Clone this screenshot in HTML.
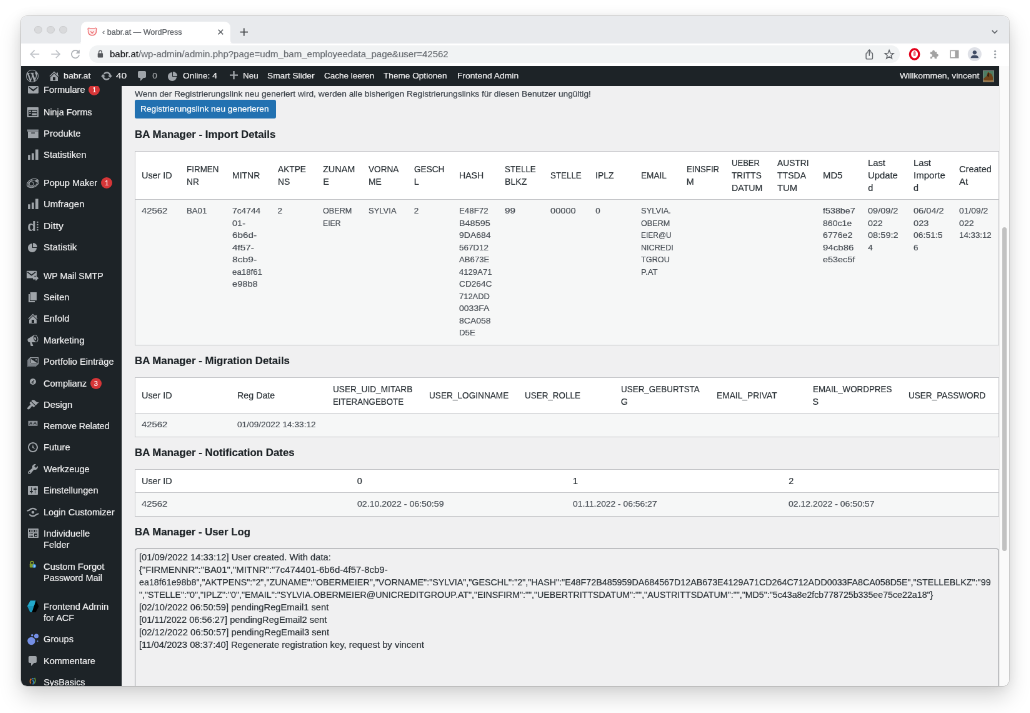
<!DOCTYPE html>
<html lang="de">
<head>
<meta charset="utf-8">
<title>‹ babr.at — WordPress</title>
<style>
*{box-sizing:border-box}
html,body{margin:0;padding:0}
body{width:1030px;height:713px;overflow:hidden;background:#fff;position:relative;font-family:"Liberation Sans",sans-serif}
#shadow{position:absolute;left:21.2px;top:15.8px;width:987.4px;height:670.3px;border-radius:6px;box-shadow:0 11px 22px rgba(0,0,0,.17),0 0 0 .5px rgba(0,0,0,.2),0 0 12px rgba(0,0,0,.07)}
#win{position:absolute;left:21px;top:16px;width:1580.2px;height:1072.2px;transform:scale(.625);transform-origin:0 0;will-change:transform;-webkit-text-stroke:.22px;border-radius:9.5px;overflow:hidden;background:#f0f0f1;color:#3c434a;font-size:13px}
#win div,#win span,#win svg,#win h2,#win table{position:absolute}
#win span{white-space:nowrap;transform-origin:0 50%}
/* chrome */
#tabstrip{left:0;top:0;width:1582px;height:43.52px;background:#e8eaed}
.tl{width:12.4px;height:12.4px;border-radius:50%;background:#d9dadc;border:1px solid #cbccce;top:16px}
#tab{left:96.32px;top:8.64px;width:238.72px;height:40px;background:#fff;border-radius:9px 9px 0 0}
#toolbar{left:0;top:43.52px;width:1582px;height:40px;background:#fff}
#pill{left:108.96px;top:3.68px;width:1297.44px;height:27.36px;border-radius:14px;background:#f1f3f4}
/* wp admin bar */
#adminbar{z-index:3;left:0;top:79.84px;width:1564.8px;height:31.92px;background:#1d2327;color:#f0f0f1}
#adminbar span{top:0;line-height:31.92px;font-size:13.6px}
/* sidebar */
#menu{z-index:2;left:0;top:100px;width:161.3px;height:980px;background:#1d2327;overflow:hidden}
.mi{left:36.2px;font-size:14.4px;line-height:18px;color:#f0f0f1}
.badge{width:18px;height:18px;border-radius:9px;background:#d63638;color:#fff;font-size:11px;line-height:18px;text-align:center}
/* content */
#content{left:160px;top:113px;width:1404.8px;height:961px;background:#f0f0f1;overflow:hidden}
#win h2{transform-origin:0 50%;margin:0;font-size:17px;line-height:22px;font-weight:bold;color:#1d2327;left:21.8px;white-space:nowrap}
#win table{border-collapse:separate;border-spacing:0;table-layout:fixed;left:21.8px;width:1382.8px;background:#fff;border:1px solid #c3c4c7}
th{font-weight:normal;text-align:left;font-size:14.4px;line-height:20px;padding:8px 10px 8px 9.8px;color:#2c3338;border-bottom:1px solid #c3c4c7;vertical-align:middle;white-space:nowrap;overflow:hidden}
td{font-size:13.4px;line-height:19.5px;padding:8px 10px 8px 9.8px;color:#4a5057;background:#f6f7f7;vertical-align:top;white-space:nowrap;overflow:hidden}
#log{left:21.8px;top:739.5px;width:1382.8px;height:240px;border:1px solid #8c8f94;border-radius:4px;background:#f0f0f1}
#log span{left:6.2px;font-size:14.3px;line-height:20px;color:#2c3338}
#win table span{position:static;display:inline-block}
#scroll{left:1564.8px;top:79.84px;width:17px;height:994px;background:#fafafa;border-left:1px solid #ececec}
#thumb{left:4.16px;top:257.76px;width:7.36px;height:518.88px;border-radius:4px;background:#c1c1c1}
</style>
</head>
<body>
<div id="shadow"></div>
<div id="win">
<div id="tabstrip">
<div class="tl" style="left:21.3px;top:15.7px"></div><div class="tl" style="left:41.4px;top:15.7px"></div><div class="tl" style="left:61.3px;top:15.7px"></div>
<div id="tab"><span style="left:33.8px;top:9.3px;font-size:12.6px;line-height:16px;color:#5f6368;transform:scaleX(0.9983)">‹ babr.at — WordPress</span></div>
</div>
<div id="toolbar">
<div id="pill"><span style="left:33.1px;top:4.5px;font-size:14.4px;line-height:18px;color:#6b6f74;transform:scaleX(1.0449)"><b style="font-weight:normal;color:#202124">babr.at</b>/wp-admin/admin.php?page=udm_bam_employeedata_page&amp;user=42562</span></div>
</div>
<svg style="left:0;top:0;z-index:5" width="1580" height="81" viewBox="0 0 1580 81"><path d="M29.2 61.0H17.0M21.6 54.9l-6.1 6.1l6.1 6.1" fill="none" stroke="#bdc1c6" stroke-width="1.700" stroke-linejoin="miter"/><path d="M48.3 61.0H60.5M55.9 54.9l6.1 6.1l-6.1 6.1" fill="none" stroke="#bdc1c6" stroke-width="1.700" stroke-linejoin="miter"/><path d="M91.6 56.9A6.200 6.200 0 1 0 93.1 62.3" fill="none" stroke="#aeb2b7" stroke-width="1.700"/><path d="M93.8 53.7v6.400h-6.400z" fill="#aeb2b7"/><rect x="122.7" y="59.5" width="8.400" height="7" rx="1" fill="#55585c"/><path d="M124.6 59.9v-2.200a2.300 2.300 0 0 1 4.600 0v2.200" fill="none" stroke="#55585c" stroke-width="1.400"/><path d="M1355.4 58.9h-1.800a1.500 1.500 0 0 0 -1.500 1.500v7a1.500 1.500 0 0 0 1.500 1.500h7.400a1.500 1.500 0 0 0 1.500 -1.500v-7a1.500 1.500 0 0 0 -1.500 -1.500h-1.800" fill="none" stroke="#5f6368" stroke-width="1.400"/><path d="M1357.3 63.8v-9.500m-2.800 2.600l2.800 -2.800l2.800 2.800" fill="none" stroke="#5f6368" stroke-width="1.400"/><polygon points="1389.1,54.7 1391.0,59.5 1396.1,59.8 1392.2,63.0 1393.4,67.9 1389.1,65.2 1384.8,67.9 1386.1,63.0 1382.2,59.8 1387.2,59.5" fill="none" stroke="#5f6368" stroke-width="1.500" stroke-linejoin="miter"/><ellipse cx="1429.6" cy="61.1" rx="7.200" ry="8.100" fill="none" stroke="#e3001b" stroke-width="3.400"/><path d="M1427.7 62.6v-5.500h1.300v-1h1.300v1h1.300v5.500c0 2-3.900 2-3.900 0z" fill="#e3001b" opacity=".55"/><path d="M1455.0 57.6h3.200a2 2 0 1 1 3.600 0h3.200v3.400a2 2 0 1 1 0 3.600v3.600h-3.400a2 2 0 1 0 -3.600 0h-3v-3.300a2.100 2.100 0 1 0 0 -3.800z" fill="#a3a3a3"/><rect x="1487.1" y="55.4" width="12.600" height="11.400" fill="none" stroke="#a3a3a3" stroke-width="1.600"/><rect x="1494.3" y="55.4" width="5.400" height="11.400" fill="#a3a3a3"/><circle cx="1525.8" cy="61.1" r="11" fill="#dfe1e7"/><circle cx="1525.8" cy="58.3" r="3.100" fill="#3f4a63"/><path d="M1519.6 67.3c0 -3.400 2.600 -4.600 6.200 -4.600s6.200 1.200 6.200 4.600z" fill="#3f4a63"/><circle cx="1558.6" cy="56.3" r="1.500" fill="#9aa0a6"/><circle cx="1558.6" cy="61.3" r="1.500" fill="#9aa0a6"/><circle cx="1558.6" cy="66.2" r="1.500" fill="#9aa0a6"/><path d="M1553.7 23.2l4.200 4.200l4.200 -4.200" fill="none" stroke="#5f6368" stroke-width="1.700"/><path d="M315.6 21.8l7.600 7.600m0 -7.600l-7.600 7.600" fill="none" stroke="#5f6368" stroke-width="1.500"/><path d="M350.6 25.6h12.400m-6.200 -6.200v12.400" fill="none" stroke="#44474a" stroke-width="1.700"/><path d="M107.5 22.3c-1.500 -2 .5 -4 2.600 -2.600h7.600c2.100 -1.400 4.100 .6 2.600 2.600c.6 4 -.6 8.600 -6.400 8.600s-7 -4.600 -6.400 -8.600z" fill="#fdecec" stroke="#ee6b6e" stroke-width="1.300"/><path d="M111.3 24.3l2.600 3.400l2.600 -3.400" fill="none" stroke="#ee6b6e" stroke-width="1.300"/><path d="M96.3 43.5h-4.500q4.500 0 4.500 -4.500zM335.0 43.5h4.500q-4.500 0 -4.500 -4.500z" fill="#fff"/></svg>
<div id="adminbar">
<span style="left:68.3px;transform:scaleX(1.0450)">babr.at</span><span style="left:152.1px;transform:scaleX(1.1386)">40</span><span style="left:210.2px;transform:scaleX(1.0000);color:#a7aaad">0</span><span style="left:259.2px;transform:scaleX(1.0072)">Online: 4</span><span style="left:355.0px;transform:scaleX(0.9982)">Neu</span><span style="left:394.2px;transform:scaleX(1.0107)">Smart Slider</span><span style="left:484.6px;transform:scaleX(0.9942)">Cache leeren</span><span style="left:580.0px;transform:scaleX(1.0024)">Theme Optionen</span><span style="left:698.4px;transform:scaleX(1.0226)">Frontend Admin</span><span style="left:1405.9px;transform:scaleX(1.0209)">Willkommen, vincent</span><svg style="left:7.6px;top:6.5px" width="20" height="20" viewBox="0 0 20 20"><path fill="#9fa4a9" d="M20 10c0-5.510-4.490-10-10-10C4.480 0 0 4.490 0 10c0 5.520 4.480 10 10 10 5.510 0 10-4.480 10-10zM7.780 15.370L4.370 6.220c.55-.02 1.170-.08 1.170-.08.5-.06.440-1.130-.06-1.110 0 0-1.450.110-2.370.110-.18 0-.37 0-.58-.01C4.120 2.690 6.870 1.110 10 1.110c2.330 0 4.450.87 6.050 2.340-.68-.11-1.650.39-1.650 1.580 0 .74.450 1.360.9 2.100.35.610.55 1.360.55 2.460 0 1.490-1.400 5-1.400 5l-3.030-8.370c.54-.02.820-.17.820-.17.5-.05.440-1.250-.06-1.220 0 0-1.440.120-2.380.120-.87 0-2.330-.12-2.330-.12-.5-.03-.56 1.200-.06 1.220l.92.080 1.260 3.410zM17.410 10c.24-.64.740-1.870.43-4.250.7 1.290 1.050 2.710 1.050 4.250 0 3.290-1.730 6.240-4.400 7.780.97-2.590 1.940-5.200 2.920-7.780zM6.100 18.090C3.120 16.650 1.110 13.530 1.110 10c0-1.300.23-2.480.72-3.590C3.250 10.300 4.670 14.200 6.100 18.090zm4.030-6.630l2.580 6.980c-.86.290-1.760.45-2.710.45-.79 0-1.570-.11-2.290-.33.810-2.380 1.620-4.740 2.420-7.100z"/></svg><svg style="left:42.8px;top:6.5px" width="20" height="20" viewBox="0 0 20 20"><path fill="#9fa4a9" d="M16 8.500l1.530 1.530-1.060 1.060L10 4.620l-6.470 6.470-1.060-1.060L10 2.500l4 4v-2h2v4zm-6-2.460l6 5.990V18H4v-5.970zM12 17v-5H8v5h4z"/></svg><svg style="left:126.6px;top:6.5px" width="20" height="20" viewBox="0 0 20 20"><path fill="#9fa4a9" d="M10.200 3.280c3.530 0 6.430 2.610 6.920 6h2.080l-3.500 4-3.500-4h2.320c-.45-1.970-2.210-3.450-4.320-3.450-1.450 0-2.730.71-3.540 1.780L4.950 5.660C6.230 4.200 8.110 3.280 10.200 3.280zm-.4 13.440c-3.520 0-6.430-2.610-6.920-6H.8l3.500-4c1.170 1.330 2.330 2.670 3.500 4H5.480c.45 1.970 2.210 3.450 4.320 3.450 1.450 0 2.730-.71 3.540-1.780l1.710 1.950c-1.280 1.460-3.150 2.380-5.250 2.380z"/></svg><svg style="left:184.2px;top:6.5px" width="20" height="20" viewBox="0 0 20 20"><path fill="#9fa4a9" d="M5 2h9c1.100 0 2 .9 2 2v7c0 1.100-.9 2-2 2h-2l-5 5v-5H5c-1.100 0-2-.9-2-2V4c0-1.100.9-2 2-2z"/></svg><svg style="left:233.2px;top:6.5px" width="20" height="20" viewBox="0 0 20 20"><path fill="#9fa4a9" d="M10 10V3c3.870 0 7 3.130 7 7h-7zM9 4v7h7c0 3.870-3.130 7-7 7s-7-3.130-7-7 3.130-7 7-7z"/></svg><svg style="left:329.7px;top:6.5px" width="20" height="20" viewBox="0 0 20 20"><path fill="#9fa4a9" d="M17 7.400v2.400h-5.300v5.400H9.300V9.800H4V7.400h5.300V2h2.400v5.400z"/></svg>
<svg style="left:1539.0px;top:6.7px" width="18" height="19" viewBox="0 0 18 19"><rect width="18" height="19" fill="#80857f"/><rect x="1" y="1" width="16" height="17" fill="#4d7c63"/><path d="M1 18V13c2-1 3-3 5-4c.5-3 1.500-6 3-6.500c1 1 1.500 2 2.500 2c2.500 1 4 4 4.500 7v6.500z" fill="#6e4218"/><path d="M7 9c.5-2.500 1-4.500 2-5.500c.8 1.500 .8 4 .3 7z" fill="#2b1a0c"/><path d="M1 15c4 1 10 1.500 16 0v3H1z" fill="#9a7444"/></svg>
</div>
<div id="menu">
<span class="mi" style="top:8.9px;transform:scaleX(1.0146)">Formulare</span><span class="badge" style="left:108.3px;top:8.9px">1</span><svg style="left:8.6px;top:7.9px" width="20" height="20" viewBox="0 0 20 20"><path fill="#9fa4a9" d="M3.87 4h13.25C18.37 4 19 4.59 19 5.79v8.42c0 1.19-.63 1.79-1.88 1.79H3.87c-1.25 0-1.88-.6-1.88-1.79V5.79c0-1.2.63-1.79 1.88-1.79zm6.62 8.6l6.74-5.53c.24-.2.43-.66.13-1.07-.29-.41-.82-.42-1.17-.17l-5.7 3.86L4.8 5.83c-.35-.25-.88-.24-1.17.17-.3.41-.11.87.13 1.07z"/></svg>
<span class="mi" style="top:44.6px;transform:scaleX(1.0001)">Ninja Forms</span><svg style="left:8.6px;top:43.6px" width="20" height="20" viewBox="0 0 20 20"><path fill="#9fa4a9" d="M2 2h16c.55 0 1 .45 1 1v14c0 .55-.45 1-1 1H2c-.55 0-1-.45-1-1V3c0-.55.45-1 1-1zm15 14V6H3v10h14zM4 7.5h3v2H4zm4.5 0H16v2.5H8.500zm0 4H16V15H8.500zM4 11.500h3v1.200H4z"/></svg>
<span class="mi" style="top:78.5px;transform:scaleX(1.0357)">Produkte</span><svg style="left:8.6px;top:77.5px" width="20" height="20" viewBox="0 0 20 20"><path fill="#858b91" d="M19 3.500v3.200H1V3.500z"/><path fill="#9fa4a9" d="M2 6.700h16.800V17.300H2zm11 3.100V8.500H7.200v1.300z"/></svg>
<span class="mi" style="top:112.9px;transform:scaleX(1.0335)">Statistiken</span><svg style="left:8.6px;top:111.9px" width="20" height="20" viewBox="0 0 20 20"><path fill="#9fa4a9" d="M18.600 18V1.500h-4.500V18zm-6.900 0V7.600H8V18zm-5.900 0v-7.700H2.100V18z"/></svg>
<span class="mi" style="top:158.4px;transform:scaleX(1.0071)">Popup Maker</span><span class="badge" style="left:128.2px;top:158.4px">1</span><svg style="left:8.6px;top:157.4px" width="20" height="20" viewBox="0 0 20 20"><g fill="none" stroke="#9fa4a9" stroke-width="1.100"><ellipse cx="10" cy="10.500" rx="10" ry="6.500" transform="rotate(-24 10 10.500)"/><ellipse cx="9.500" cy="10.800" rx="8" ry="4.800" transform="rotate(-24 10 10.500)"/><circle cx="7.500" cy="11.500" r="3.400"/></g><circle cx="16" cy="7" r="2.100" fill="#9fa4a9"/></svg>
<span class="mi" style="top:192.4px;transform:scaleX(1.0353)">Umfragen</span><svg style="left:8.6px;top:191.4px" width="20" height="20" viewBox="0 0 20 20"><path fill="#9fa4a9" d="M18.600 18V1.500h-4.500V18zm-6.900 0V7.600H8V18zm-5.900 0v-7.700H2.100V18z"/></svg>
<span class="mi" style="top:226.8px;transform:scaleX(1.1061)">Ditty</span><svg style="left:8.6px;top:225.8px" width="20" height="20" viewBox="0 0 20 20"><text x="1.200" y="17.600" font-family="Liberation Sans,sans-serif" font-weight="bold" font-size="22.500" fill="#9fa4a9">d</text><g fill="#9fa4a9"><rect x="16.400" y="2.800" width="2.100" height="2.100"/><rect x="16.400" y="6.900" width="2.100" height="2.100"/><rect x="16.400" y="11" width="2.100" height="2.100"/><rect x="16.400" y="15.100" width="2.100" height="2.100"/></g></svg>
<span class="mi" style="top:261.4px;transform:scaleX(1.0603)">Statistik</span><svg style="left:8.6px;top:260.4px" width="20" height="20" viewBox="0 0 20 20"><path fill="#9fa4a9" d="M10 10V3c3.870 0 7 3.130 7 7h-7zM9 4v7h7c0 3.870-3.130 7-7 7s-7-3.130-7-7 3.130-7 7-7z"/></svg>
<span class="mi" style="top:306.7px;transform:scaleX(0.9831)">WP Mail SMTP</span><svg style="left:8.6px;top:305.7px" width="20" height="20" viewBox="0 0 20 20"><g transform="translate(-1 .3)"><path fill="#9fa4a9" d="M1.800 1.500h14c1 0 1.500.5 1.500 1.500v6.500h-3.800v3.800H1.800c-1 0-1.500-.5-1.500-1.500V3c0-1 .5-1.500 1.500-1.500z"/><path fill="none" stroke="#1d2327" stroke-width="1.700" d="M2.300 3.300l6.500 5 6.500-5"/><path fill="#9fa4a9" d="M11 11.200h4.500V8.600l4.700 4.600-4.700 4.600v-2.600H11z"/></g></svg>
<span class="mi" style="top:340.9px;transform:scaleX(1.0153)">Seiten</span><svg style="left:8.6px;top:339.9px" width="20" height="20" viewBox="0 0 20 20"><path fill="#9fa4a9" d="M6 15V2h10v13H6zm-1 1h8v2H3V5h2v11z"/></svg>
<span class="mi" style="top:375.3px;transform:scaleX(1.0153)">Enfold</span><svg style="left:8.6px;top:374.3px" width="20" height="20" viewBox="0 0 20 20"><path fill="#9fa4a9" d="M16 8.500l1.530 1.530-1.060 1.060L10 4.620l-6.470 6.470-1.060-1.060L10 2.500l4 4v-2h2v4zm-6-2.460l6 5.990V18H4v-5.970zM12 17v-5H8v5h4z"/></svg>
<span class="mi" style="top:409.7px;transform:scaleX(1.0353)">Marketing</span><svg style="left:8.6px;top:408.7px" width="20" height="20" viewBox="0 0 20 20"><path fill="#9fa4a9" d="M18.150 5.940c.46 1.620.38 3.220-.02 4.480-.42 1.280-1.260 2.180-2.300 2.480-.16.060-.26.060-.4.060-.06.020-.12.020-.18.020-.06.020-.14.020-.22.020h-6.800l2.220 5.500c.02.140-.06.260-.14.340-.08.100-.24.160-.34.160H6.950c-.1 0-.26-.06-.34-.16-.08-.08-.16-.2-.14-.34l-1-5.500H4.250l-.02-.02c-.5.060-1.080-.18-1.540-.62s-.88-1.080-1.060-1.880c-.24-.8-.2-1.560-.02-2.200.18-.62.580-1.080 1.060-1.300l.02-.02 9-5.400c.1-.06.180-.1.240-.16.060-.04.140-.08.240-.12.160-.1.300-.12.460-.18 1.040-.3 2.240.1 3.220.98 1.020.9 1.840 2.260 2.300 3.860zm-2.580 5.980h-.02c.4-.1.740-.34 1.040-.7.580-.7.860-1.760.86-3.040 0-.64-.1-1.300-.28-1.980-.34-1.360-1.020-2.500-1.780-3.240s-1.680-1.100-2.460-.88c-.82.220-1.400.96-1.700 2-.32 1.040-.28 2.360.06 3.720.38 1.360 1 2.500 1.800 3.240.78.740 1.620 1.100 2.480.88zm-2.540-7.080c.22-.04.420-.02.620.04.380.16.760.48 1.020 1s.42 1.200.42 1.780c0 .3-.04.560-.12.800-.18.480-.44.840-.86.940-.34.100-.8-.06-1.140-.4s-.64-.86-.78-1.500c-.18-.62-.12-1.240.02-1.720s.48-.84.820-.94z"/></svg>
<span class="mi" style="top:444.1px;transform:scaleX(1.0199)">Portfolio Einträge</span><svg style="left:8.6px;top:443.1px" width="20" height="20" viewBox="0 0 20 20"><path d="M1 7.500L5.500 3H19v11l-4.500 4H1z" fill="#7b8187"/><path d="M5 3h14v11H5z" fill="#9fa4a9"/><path d="M6.300 4.300h11.400v8.400H6.300z" fill="#1d2327"/><path d="M7 5.800l9.500 6.200H7z" fill="#9fa4a9"/><circle cx="15.200" cy="7.200" r="1.100" fill="#9fa4a9"/><path d="M1.600 8v9.400H14" fill="none" stroke="#5d6369" stroke-width=".9"/></svg>
<span class="mi" style="top:478.5px;transform:scaleX(1.0163)">Complianz</span><span class="badge" style="left:110.9px;top:478.5px">3</span><svg style="left:8.6px;top:477.5px" width="20" height="20" viewBox="0 0 20 20"><circle cx="10" cy="7" r="5" fill="#9fa4a9"/><path d="M8 8.500l4-3.500M8.200 9.200h3.200" stroke="#1d2327" stroke-width="1.300" fill="none"/></svg>
<span class="mi" style="top:512.8px;transform:scaleX(1.0319)">Design</span><svg style="left:8.6px;top:511.8px" width="20" height="20" viewBox="0 0 20 20"><path fill="#9fa4a9" d="M14.480 11.060L7.410 3.990l1.500-1.500c.5-.56 2.300-.47 3.510.32 1.210.8 1.430 1.280 2.910 2.100 1.180.64 2.450 1.260 4.450.85zm-.71.710L6.700 4.700 4.930 6.470c-.39.390-.39 1.020 0 1.410l1.060 1.060c.39.390.39 1.030 0 1.420-.6.600-1.430 1.110-2.210 1.690-.35.260-.7.530-1.010.84C1.430 14.230.4 16.080 1.400 17.070c.99 1 2.840-.03 4.180-1.360.31-.31.580-.66.850-1.020.57-.78 1.080-1.610 1.690-2.210.39-.39 1.020-.39 1.410 0l1.060 1.060c.39.390 1.020.39 1.410 0z"/></svg>
<span class="mi" style="top:547.0px;transform:scaleX(0.9847)">Remove Related</span><svg style="left:8.6px;top:546.0px" width="20" height="20" viewBox="0 0 20 20"><rect x="2.500" y="1.800" width="15" height="8" fill="#8a8f95"/><path d="M4.500 7.500l2.500-3 1.500 3M11 7.500l2.500-3.200 2 3.200" stroke="#1d2327" stroke-width="1.200" fill="none"/></svg>
<span class="mi" style="top:581.2px;transform:scaleX(1.0269)">Future</span><svg style="left:8.6px;top:580.2px" width="20" height="20" viewBox="0 0 20 20"><path fill="#9fa4a9" d="M10 2c4.420 0 8 3.580 8 8s-3.580 8-8 8-8-3.580-8-8 3.580-8 8-8zm0 14c3.310 0 6-2.690 6-6s-2.690-6-6-6-6 2.690-6 6 2.690 6 6 6zm-.71-5.290c.07.050.14.100.23.150l-.02.020L14 13l-3.030-3.190L10 5l-.97 4.810h.01c0 .02-.01.050-.02.090S9 9.970 9 10c0 .28.100.52.290.71z"/></svg>
<span class="mi" style="top:615.8px;transform:scaleX(1.0166)">Werkzeuge</span><svg style="left:8.6px;top:614.8px" width="20" height="20" viewBox="0 0 20 20"><path fill="#9fa4a9" d="M16.680 9.770c-1.340 1.340-3.300 1.670-4.950.99l-5.410 6.520c-.99.990-2.590.990-3.580 0s-.99-2.590 0-3.570l6.520-5.420c-.68-1.650-.35-3.610.99-4.950 1.280-1.280 3.120-1.620 4.720-1.060l-2.890 2.890 2.820 2.820 2.860-2.870c.53 1.580.18 3.390-1.080 4.650zM3.810 16.210c.4.390 1.040.39 1.430 0 .4-.4.400-1.040 0-1.430-.39-.4-1.030-.4-1.430 0-.39.390-.39 1.030 0 1.430z"/></svg>
<span class="mi" style="top:650.4px;transform:scaleX(1.0124)">Einstellungen</span><svg style="left:8.6px;top:649.4px" width="20" height="20" viewBox="0 0 20 20"><path fill="#9fa4a9" d="M18 16V4c0-.55-.45-1-1-1H3c-.55 0-1 .45-1 1v12c0 .55.450 1 1 1h14c.55 0 1-.45 1-1zM8 11h1c.55 0 1 .45 1 1s-.45 1-1 1H8v1.500c0 .28-.22.500-.5.500s-.5-.22-.5-.5V13H6c-.55 0-1-.45-1-1s.45-1 1-1h1V5.500c0-.28.220-.5.500-.5s.5.220.5.500V11zm5-2h-1c-.55 0-1-.45-1-1s.45-1 1-1h1V5.500c0-.28.220-.5.500-.5s.5.220.5.500V7h1c.55 0 1 .45 1 1s-.45 1-1 1h-1v5.500c0 .28-.22.500-.5.500s-.5-.22-.5-.5V9z"/></svg>
<span class="mi" style="top:684.6px;transform:scaleX(1.0140)">Login Customizer</span><svg style="left:8.6px;top:683.6px" width="20" height="20" viewBox="0 0 20 20"><g fill="none" stroke="#9fa4a9" stroke-width="2.200" stroke-linecap="round"><path d="M1.500 7.500c1.500-.2 2.500-.6 3.600-1.600 2.800-2.600 7-2.600 9.800 0"/><path d="M18.500 12.500c-1.500.2-2.500.6-3.600 1.600-2.800 2.600-7 2.600-9.800 0"/></g><circle cx="10" cy="10" r="2.300" fill="#9fa4a9"/></svg>
<span class="mi" style="top:719.0px;transform:scaleX(1.0328)">Individuelle</span><span class="mi" style="top:737.0px;transform:scaleX(1.0157)">Felder</span><svg style="left:8.6px;top:718.0px" width="20" height="20" viewBox="0 0 20 20"><path fill="#9fa4a9" d="M19 16V3c0-.55-.45-1-1-1H3c-.55 0-1 .45-1 1v13c0 .55.450 1 1 1h15c.55 0 1-.45 1-1zM4 4h13v4H4V4zm1 1v2h3V5H5zm4 0v2h3V5H9zm4 0v2h3V5h-3zm-8.500 5c.28 0 .5.220.5.500s-.22.500-.5.500-.5-.22-.5-.5.220-.5.500-.5zM6 10h4v1H6v-1zm6 0h5v5h-5v-5zm-7.500 2c.28 0 .5.220.5.500s-.22.500-.5.500-.5-.22-.5-.5.220-.5.500-.5zM6 12h4v1H6v-1zm7 0v2h3v-2h-3zm-8.500 2c.28 0 .5.220.5.500s-.22.500-.5.500-.5-.22-.5-.5.220-.5.500-.5zM6 14h4v1H6v-1z"/></svg>
<span class="mi" style="top:772.3px;transform:scaleX(1.0234)">Custom Forgot</span><span class="mi" style="top:790.3px;transform:scaleX(1.0033)">Password Mail</span><svg style="left:8.6px;top:771.3px" width="20" height="20" viewBox="0 0 20 20"><path d="M6.300 5.500V3.800a2.300 2.300 0 0 1 4.600 0v1.700" fill="none" stroke="#8aa62f" stroke-width="1.500"/><rect x="4.800" y="5.200" width="7.600" height="6.300" rx="1" fill="#7f9c2c"/><circle cx="12.300" cy="9" r="2.900" fill="#3f92dd"/><circle cx="12.300" cy="9" r="1" fill="#bfe0ff"/></svg>
<span class="mi" style="top:835.5px;transform:scaleX(1.0248)">Frontend Admin</span><span class="mi" style="top:853.5px;transform:scaleX(1.0067)">for ACF</span><svg style="left:8.6px;top:834.5px" width="20" height="20" viewBox="0 0 20 20"><path d="M6 .5h9l4.500 9L14.500 19h-9L1 9.500z" fill="#000"/><path d="M6 .5h8.500L8.500 19h-3L1 9.500z" fill="#1b93b6"/><path d="M6 .5h8.500l-2.800 8.600H1.200z" fill="#23a9cb"/></svg>
<span class="mi" style="top:888.1px;transform:scaleX(1.0168)">Groups</span><svg style="left:8.6px;top:887.1px" width="20" height="20" viewBox="0 0 20 20"><g fill="#7590e6"><circle cx="7.500" cy="13" r="6.200"/><circle cx="15.500" cy="5" r="3.600"/><circle cx="8.800" cy="3.800" r="1.800"/><circle cx="17.500" cy="13.300" r="1"/></g></svg>
<span class="mi" style="top:923.0px;transform:scaleX(1.0056)">Kommentare</span><svg style="left:8.6px;top:922.0px" width="20" height="20" viewBox="0 0 20 20"><path fill="#9fa4a9" d="M5 2h9c1.100 0 2 .9 2 2v7c0 1.100-.9 2-2 2h-2l-5 5v-5H5c-1.100 0-2-.9-2-2V4c0-1.100.9-2 2-2z"/></svg>
<span class="mi" style="top:957.2px;transform:scaleX(1.0000)">SysBasics</span><svg style="left:8.6px;top:956.2px" width="20" height="20" viewBox="0 0 20 20"><path d="M7.500 4.500c-2 1.500-2.600 4.500-1 7.500" fill="none" stroke="#d9722a" stroke-width="1.800"/><path d="M12.500 3c1.800 2.200 1.800 6-.5 9" fill="none" stroke="#6a9a3a" stroke-width="2"/><path d="M9.500 6.500l2 3-1.500 4" fill="none" stroke="#2f7fc2" stroke-width="2"/><circle cx="10" cy="4.300" r="1.300" fill="#2f7fc2"/></svg>
</div>
<div id="content">
<span style="left:21.9px;top:2.3px;font-size:13.6px;line-height:20px;color:#3c434a;transform:scaleX(1.0107)">Wenn der Registrierungslink neu generiert wird, werden alle bisherigen Registrierungslinks für diesen Benutzer ungültig!</span>
<div style="left:21.5px;top:21.4px;width:226.6px;height:29.6px;background:#2271b1;border-radius:3px"><span style="left:9.7px;top:0;line-height:29.6px;font-size:13.6px;color:#fff;transform:scaleX(1.0115)">Registrierungslink neu generieren</span></div>
<h2 style="top:66.4px;transform:scaleX(0.9927)">BA Manager - Import Details</h2>
<table style="top:103.2px"><tr style="height:77.0px"><th><span style="transform:scaleX(0.9998)">User ID</span></th><th><span style="transform:scaleX(0.9330)">FIRMEN</span><br><span style="transform:scaleX(0.9518)">NR</span></th><th><span style="transform:scaleX(0.9716)">MITNR</span></th><th><span style="transform:scaleX(0.9530)">AKTPE</span><br><span style="transform:scaleX(0.9696)">NS</span></th><th><span style="transform:scaleX(1.0020)">ZUNAM</span><br><span>E</span></th><th><span style="transform:scaleX(0.9470)">VORNA</span><br><span style="transform:scaleX(0.9628)">ME</span></th><th><span style="transform:scaleX(0.9470)">GESCH</span><br><span>L</span></th><th><span style="transform:scaleX(0.9797)">HASH</span></th><th><span style="transform:scaleX(0.9285)">STELLE</span><br><span style="transform:scaleX(0.9856)">BLKZ</span></th><th><span style="transform:scaleX(0.9285)">STELLE</span></th><th><span style="transform:scaleX(0.9765)">IPLZ</span></th><th><span style="transform:scaleX(0.9464)">EMAIL</span></th><th><span style="transform:scaleX(0.9189)">EINSFIR</span><br><span>M</span></th><th><span style="transform:scaleX(0.9069)">UEBER</span><br><span style="transform:scaleX(0.9485)">TRITTS</span><br><span style="transform:scaleX(0.9874)">DATUM</span></th><th><span style="transform:scaleX(0.9601)">AUSTRI</span><br><span style="transform:scaleX(0.9766)">TTSDA</span><br><span style="transform:scaleX(1.0322)">TUM</span></th><th><span style="transform:scaleX(1.0326)">MD5</span></th><th><span style="transform:scaleX(1.0286)">Last</span><br><span style="transform:scaleX(1.0293)">Update</span><br><span>d</span></th><th><span style="transform:scaleX(1.0286)">Last</span><br><span style="transform:scaleX(1.0426)">Importe</span><br><span>d</span></th><th><span style="transform:scaleX(1.0130)">Created</span><br><span style="transform:scaleX(1.0507)">At</span></th></tr>
<tr style="height:231.5px"><td><span style="transform:scaleX(1.1058)">42562</span></td><td><span style="transform:scaleX(0.9855)">BA01</span></td><td><span style="transform:scaleX(1.0306)">7c4744</span><br><span style="transform:scaleX(1.0846)">01-</span><br><span style="transform:scaleX(1.1410)">6b6d-</span><br><span style="transform:scaleX(1.1461)">4f57-</span><br><span style="transform:scaleX(1.1667)">8cb9-</span><br><span style="transform:scaleX(0.9911)">ea18f61</span><br><span style="transform:scaleX(1.0951)">e98b8</span></td><td><span>2</span></td><td><span style="transform:scaleX(0.9424)">OBERM</span><br><span style="transform:scaleX(0.9114)">EIER</span></td><td><span style="transform:scaleX(0.9711)">SYLVIA</span></td><td><span>2</span></td><td><span style="transform:scaleX(0.9930)">E48F72</span><br><span style="transform:scaleX(1.0759)">B48595</span><br><span style="transform:scaleX(1.0471)">9DA684</span><br><span style="transform:scaleX(1.0014)">567D12</span><br><span style="transform:scaleX(0.9844)">AB673E</span><br><span style="transform:scaleX(0.9786)">4129A71</span><br><span style="transform:scaleX(1.0217)">CD264C</span><br><span style="transform:scaleX(0.9676)">712ADD</span><br><span style="transform:scaleX(1.0479)">0033FA</span><br><span style="transform:scaleX(1.0471)">8CA058</span><br><span style="transform:scaleX(0.9900)">D5E</span></td><td><span style="transform:scaleX(1.1544)">99</span></td><td><span style="transform:scaleX(1.0951)">00000</span></td><td><span>0</span></td><td><span style="transform:scaleX(0.9668)">SYLVIA.</span><br><span style="transform:scaleX(0.9424)">OBERM</span><br><span style="transform:scaleX(0.8928)">EIER@U</span><br><span style="transform:scaleX(0.9404)">NICREDI</span><br><span style="transform:scaleX(0.9508)">TGROU</span><br><span style="transform:scaleX(0.9795)">P.AT</span></td><td><span></span></td><td><span></span></td><td><span></span></td><td><span style="transform:scaleX(1.0695)">f538be7</span><br><span style="transform:scaleX(1.0533)">860c1e</span><br><span style="transform:scaleX(1.0579)">6776e2</span><br><span style="transform:scaleX(1.1238)">94cb86</span><br><span style="transform:scaleX(1.0780)">e53ec5f</span></td><td><span style="transform:scaleX(1.0827)">09/09/2</span><br><span style="transform:scaleX(1.0648)">022</span><br><span style="transform:scaleX(1.0894)">08:59:2</span><br><span>4</span></td><td><span style="transform:scaleX(1.0894)">06/04/2</span><br><span style="transform:scaleX(1.0916)">023</span><br><span style="transform:scaleX(1.0424)">06:51:5</span><br><span>6</span></td><td><span style="transform:scaleX(1.0357)">01/09/2</span><br><span style="transform:scaleX(1.0648)">022</span><br><span style="transform:scaleX(0.9932)">14:33:12</span></td></tr></table>
<h2 style="top:428.3px;transform:scaleX(0.9892)">BA Manager - Migration Details</h2>
<table style="top:465.4px"><tr style="height:57.0px"><th><span style="transform:scaleX(0.9998)">User ID</span></th><th><span style="transform:scaleX(0.9911)">Reg Date</span></th><th><span style="transform:scaleX(0.9496)">USER_UID_MITARB</span><br><span style="transform:scaleX(0.9238)">EITERANGEBOTE</span></th><th><span style="transform:scaleX(0.9477)">USER_LOGINNAME</span></th><th><span style="transform:scaleX(0.9345)">USER_ROLLE</span></th><th><span style="transform:scaleX(0.9346)">USER_GEBURTSTA</span><br><span>G</span></th><th><span style="transform:scaleX(0.9565)">EMAIL_PRIVAT</span></th><th><span style="transform:scaleX(0.9292)">EMAIL_WORDPRES</span><br><span>S</span></th><th><span style="transform:scaleX(0.9415)">USER_PASSWORD</span></th></tr>
<tr style="height:36.5px"><td><span style="transform:scaleX(1.1058)">42562</span></td><td><span style="transform:scaleX(1.0232)">01/09/2022 14:33:12</span></td><td><span></span></td><td><span></span></td><td><span></span></td><td><span></span></td><td><span></span></td><td><span></span></td><td><span></span></td></tr></table>
<h2 style="top:575.0px;transform:scaleX(0.9900)">BA Manager - Notification Dates</h2>
<table style="top:612.1px"><tr style="height:37.0px"><th><span style="transform:scaleX(0.9998)">User ID</span></th><th><span>0</span></th><th><span>1</span></th><th><span>2</span></th></tr>
<tr style="height:36.5px"><td><span style="transform:scaleX(1.1058)">42562</span></td><td><span style="transform:scaleX(1.0570)">02.10.2022 - 06:50:59</span></td><td><span style="transform:scaleX(1.0335)">01.11.2022 - 06:56:27</span></td><td><span style="transform:scaleX(1.0493)">02.12.2022 - 06:50:57</span></td></tr></table>
<h2 style="top:701.6px;transform:scaleX(0.9869)">BA Manager - User Log</h2>
<div id="log" style="top:739.1px">
<span style="top:2.6px;transform:scaleX(1.0322)">[01/09/2022 14:33:12] User created. With data:</span>
<span style="top:22.6px;transform:scaleX(1.0454)">{"FIRMENNR":"BA01","MITNR":"7c474401-6b6d-4f57-8cb9-</span>
<span style="top:42.6px;transform:scaleX(0.9998)">ea18f61e98b8","AKTPENS":"2","ZUNAME":"OBERMEIER","VORNAME":"SYLVIA","GESCHL":"2","HASH":"E48F72B485959DA684567D12AB673E4129A71CD264C712ADD0033FA8CA058D5E","STELLEBLKZ":"99</span>
<span style="top:62.6px;transform:scaleX(0.9946)">","STELLE":"0","IPLZ":"0","EMAIL":"SYLVIA.OBERMEIER@UNICREDITGROUP.AT","EINSFIRM":"","UEBERTRITTSDATUM":"","AUSTRITTSDATUM":"","MD5":"5c43a8e2fcb778725b335ee75ce22a18"}</span>
<span style="top:82.6px;transform:scaleX(1.0285)">[02/10/2022 06:50:59] pendingRegEmail1 sent</span>
<span style="top:102.6px;transform:scaleX(1.0218)">[01/11/2022 06:56:27] pendingRegEmail2 sent</span>
<span style="top:122.6px;transform:scaleX(1.0312)">[02/12/2022 06:50:57] pendingRegEmail3 sent</span>
<span style="top:142.6px;transform:scaleX(1.0344)">[11/04/2023 08:37:40] Regenerate registration key, request by vincent</span>
</div>
</div>
<div id="scroll"><div id="thumb"></div></div>
</div>
</body>
</html>
